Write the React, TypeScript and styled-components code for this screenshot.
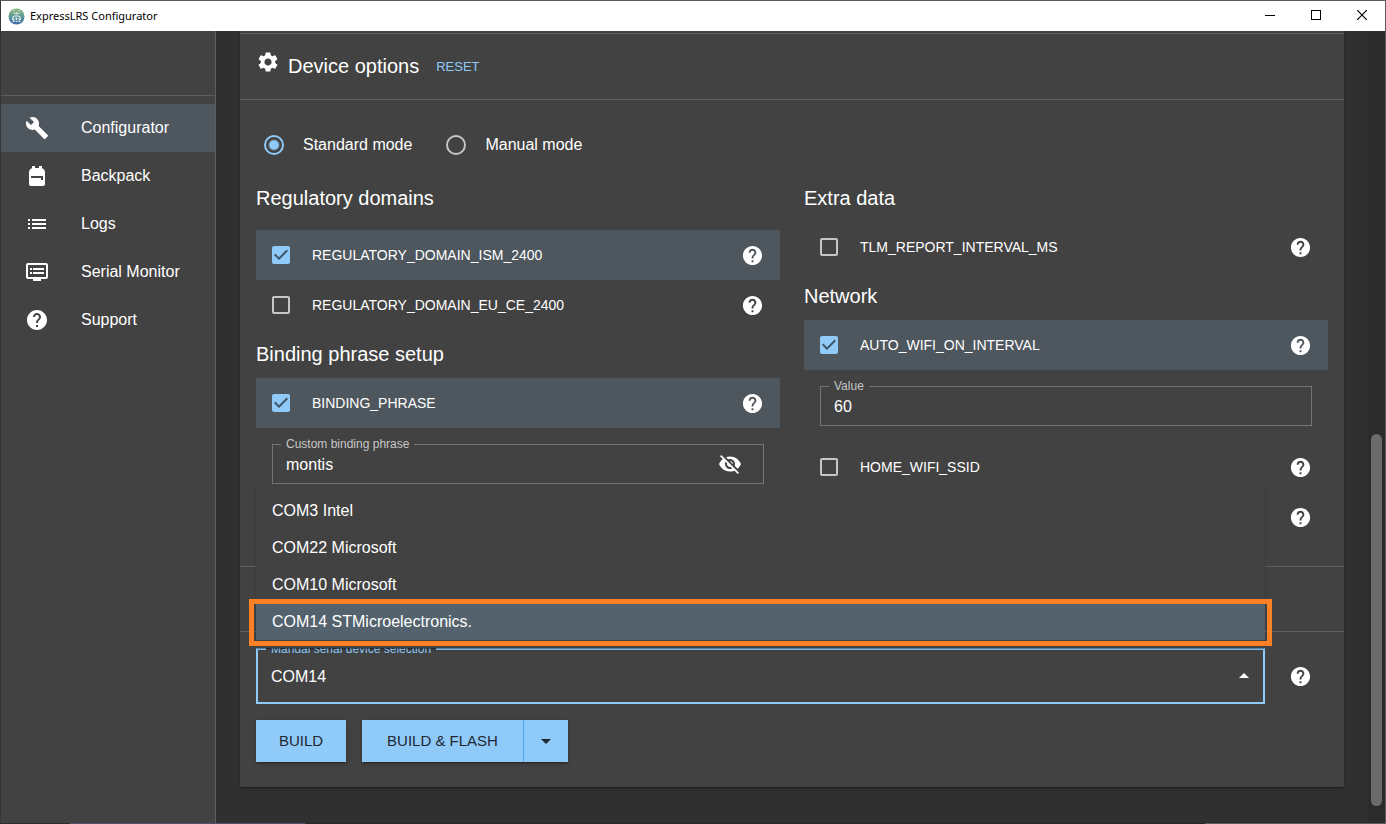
import React, { useState } from 'react';
import styled, { createGlobalStyle, css } from 'styled-components';
import {
  MdArrowDropDown,
  MdArrowDropUp,
  MdBuild,
  MdDvr,
  MdHelp,
  MdList,
  MdSettings,
  MdVisibilityOff,
} from 'react-icons/md';

const GlobalStyle = createGlobalStyle`
  *, *::before, *::after { box-sizing: border-box; }
  body {
    margin: 0;
    background: #303030;
    color: #fff;
    font: 16px/24px "Liberation Sans", Arial, sans-serif;
  }
  button, input, select { font: inherit; color: inherit; }
  button { cursor: pointer; }
  h2, h3, ul { margin: 0; padding: 0; font-weight: 400; }
  ul { list-style: none; }
`;

/* ---------- window ---------- */

const Window = styled.div`
  min-height: 100vh;
  display: flex;
  flex-direction: column;
  border: 1px solid #5c5c5f;
  border-left-color: #363636;
  border-bottom: 0;
`;

const TitleBar = styled.header`
  height: 30px;
  display: flex;
  align-items: center;
  padding-left: 7px;
  gap: 5px;
  background: #fff;
  color: #000;
`;

const WindowTitle = styled.span`
  flex: 1;
  font: 11px/16px "Noto Sans", "Open Sans", sans-serif;
`;

const WindowControls = styled.div`
  display: flex;
`;

const WindowButton = styled.button`
  width: 46px;
  height: 30px;
  padding: 0 0 2px;
  display: grid;
  place-items: center;
  border: 0;
  background: none;
`;

const WindowEdge = styled.div`
  height: 1px;
  background: linear-gradient(
    90deg,
    #2e2a2b 5%,
    #4d5565 5% 22%,
    #2a2729 22% 87%,
    #5c5c5c 87%
  );
`;

const Workspace = styled.div`
  flex: 1;
  display: flex;
`;

/* ---------- side navigation ---------- */

const Sidebar = styled.nav`
  width: 215px;
  flex: none;
  background: #424242;
  border-right: 1px solid #5e5e5e;
`;

const SidebarTop = styled.div`
  height: 65px;
  border-bottom: 1px solid #5e5e5e;
`;

const NavList = styled.ul`
  padding-top: 8px;
`;

const NavLink = styled.a<{ $active?: boolean }>`
  height: 48px;
  display: flex;
  align-items: center;
  gap: 32px;
  padding: 0 24px;
  color: #fff;
  text-decoration: none;
  background: ${(p) => (p.$active ? '#4e565e' : 'transparent')};

  svg { flex: none; }
`;

/* ---------- content ---------- */

const Main = styled.main`
  flex: 1;
  min-width: 0;
  padding: 0 24px 36px;
`;

const Card = styled.div`
  padding-top: 2px;
  background: #424242;
  box-shadow: 0 2px 1px -1px rgba(0, 0, 0, 0.2), 0 1px 1px rgba(0, 0, 0, 0.14),
    0 1px 3px rgba(0, 0, 0, 0.12);
`;

const SectionHeader = styled.div`
  min-height: 66px;
  display: flex;
  padding: 16px;
  border: solid #5e5e5e;
  border-width: 1px 0;
`;

const SectionTitle = styled.h2`
  display: flex;
  gap: 8px;
  margin-right: 12px;
  font-size: 20px;
  line-height: 32px;
`;

const ResetButton = styled.button`
  padding: 4px 5px;
  border: 0;
  background: none;
  color: #90caf9;
  font-size: 13px;
  line-height: 25px;
`;

const OptionsBody = styled.div`
  padding: 24px 16px;
`;

const ModeGroup = styled.div`
  display: flex;
  gap: 34px;
  height: 42px;
  margin-bottom: 8px;
  padding-left: 8px;
`;

const ModeLabel = styled.label`
  display: flex;
  align-items: center;
  gap: 19px;
`;

const Radio = styled.input`
  appearance: none;
  width: 20px;
  height: 20px;
  margin: 0;
  border: 2px solid #c6c6c6;
  border-radius: 50%;

  &:checked {
    border-color: #90caf9;
    background: radial-gradient(circle, #90caf9 4px, transparent 6px);
  }
`;

const Columns = styled.div`
  display: grid;
  grid-template-columns: 1fr 1fr;
  gap: 24px;
`;

const GroupTitle = styled.h3`
  padding: 8px 0;
  font-size: 20px;
  line-height: 32px;
`;

const FlagList = styled.ul<{ $spaced?: boolean }>`
  padding-top: ${(p) => (p.$spaced ? '8px' : '0')};
`;

const FlagRow = styled.li<{ $selected?: boolean }>`
  height: 50px;
  display: flex;
  align-items: center;
  justify-content: flex-end;
  padding: 0 16px;
  background: ${(p) => (p.$selected ? '#4e565e' : 'transparent')};
`;

const FlagLabel = styled.label`
  flex: 1;
  display: flex;
  align-items: center;
  gap: 22px;
  font-size: 14px;
`;

const CheckBoxFrame = styled.span`
  display: grid;

  > * { grid-area: 1 / 1; }
  svg { pointer-events: none; }
`;

const CheckBox = styled.input`
  appearance: none;
  width: 18px;
  height: 18px;
  margin: 0;
  border: 2px solid #c6c6c6;
  border-radius: 2px;

  &:checked {
    border-color: #90caf9;
    background: #90caf9;
  }
`;

const IconButton = styled.button`
  flex: none;
  display: flex;
  padding: 0;
  border: 0;
  background: none;
`;

const HelpIconButton = styled(IconButton)`
  padding: 1px 0 0 1px;
`;

const outlineLabel = css`
  position: absolute;
  left: 8px;
  top: -9px;
  padding: 0 5px;
  background: #424242;
  font-size: 12px;
  line-height: 16px;
`;

const Field = styled.div`
  position: relative;
  height: 40px;
  margin: 16px;
  display: flex;
  align-items: center;
  padding: 0 21px 0 13px;
  border: 1px solid #757575;
`;

const FieldLabel = styled.label`
  ${outlineLabel}
  color: #c6c6c6;
`;

const TextInput = styled.input`
  flex: 1;
  min-width: 0;
  padding: 1px 0 0;
  border: 0;
  outline: 0;
  background: none;
`;

/* ---------- actions ---------- */

const ActionsBody = styled.div`
  padding: 16px 16px 24px;
`;

const DeviceRow = styled.div`
  display: flex;
  align-items: center;
  gap: 23px;
  padding-right: 16px;
`;

const SelectBox = styled.div`
  position: relative;
  flex: 1;
  height: 56px;
  display: flex;
  border: 2px solid #90caf9;
`;

const SelectLabel = styled.label`
  ${outlineLabel}
  color: #90caf9;
`;

const DeviceSelect = styled.select`
  appearance: none;
  flex: 1;
  padding: 1px 40px 0 13px;
  border: 0;
  outline: 0;
  background: none;
`;

const SelectArrow = styled.span`
  position: absolute;
  right: 7px;
  top: 14px;
  display: flex;
  pointer-events: none;
`;

const Menu = styled.ul`
  position: absolute;
  z-index: 2;
  left: -2px;
  right: -2px;
  bottom: calc(100% + 2px);
  padding: 8px 0;
  background: #424242;
  box-shadow: 0 2px 1px -1px rgba(0, 0, 0, 0.2), 0 1px 1px rgba(0, 0, 0, 0.14),
    0 1px 3px rgba(0, 0, 0, 0.12);
`;

const MenuItem = styled.li<{ $selected?: boolean }>`
  position: relative;
  padding: 6px 16px;
  line-height: 25px;
  cursor: pointer;

  ${(p) =>
    p.$selected &&
    css`
      background: #54626d;

      &::after {
        content: '';
        position: absolute;
        inset: -4px -7px -6px;
        border: 5px solid #ff8127;
      }
    `}
`;

const ButtonRow = styled.div`
  display: flex;
  gap: 16px;
  margin-top: 16px;
  padding-bottom: 1px;
`;

const PrimaryButton = styled.button`
  height: 42px;
  min-width: 44px;
  display: grid;
  place-items: center;
  padding: 0 22px;
  border: 0;
  background: #90caf9;
  color: #1d2832;
  font-size: 15px;
  box-shadow: 0 3px 1px -2px rgba(0, 0, 0, 0.2), 0 2px 2px rgba(0, 0, 0, 0.14),
    0 1px 5px rgba(0, 0, 0, 0.12);
`;

const BuildButton = styled(PrimaryButton)`
  min-width: 90px;
`;

const SplitButton = styled.div`
  display: flex;
  box-shadow: 0 3px 1px -2px rgba(0, 0, 0, 0.2), 0 2px 2px rgba(0, 0, 0, 0.14),
    0 1px 5px rgba(0, 0, 0, 0.12);
`;

const FlashButton = styled(PrimaryButton)`
  min-width: 162px;
  border-right: 1px solid #42a5f5;
  box-shadow: none;
`;

const FlashMenuButton = styled(PrimaryButton)`
  padding: 0 10px;
  box-shadow: none;
`;

/* ---------- scroll bar ---------- */

const ScrollTrack = styled.div`
  width: 17px;
  flex: none;
  display: flex;
  flex-direction: column;
  justify-content: flex-end;
  padding: 0 3px 17px;
  background: #2b2b2b;
`;

const ScrollThumb = styled.div`
  height: 48%;
  border-radius: 6px;
  background: #6b6b6b;
`;

/* ---------- drawings ---------- */

const AppLogo = () => (
  <svg width="17" height="17" viewBox="0 0 34 34" aria-hidden="true">
    <defs>
      <linearGradient id="logo" x1="0" y1="0" x2="0" y2="1">
        <stop offset="0" stopColor="#8db97c" />
        <stop offset="0.5" stopColor="#5c9a98" />
        <stop offset="1" stopColor="#3d68ae" />
      </linearGradient>
    </defs>
    <circle cx="17" cy="17" r="16" fill="url(#logo)" />
    <g fill="none" stroke="#e9f3ee" strokeWidth="2">
      <path d="M12 4v3M22 4v3M11 10q6 4 12 0M17 8v3" />
      <path d="M9 18l4-2h8l4 2M13 20H9v3h3v4H9M21 20h4v3h-3v4h3" />
      <path d="M16 20h2v3h-2zM15 27h4" />
    </g>
  </svg>
);

const BackpackIcon = () => (
  <svg width="24" height="24" viewBox="0 0 24 24" fill="currentColor" aria-hidden="true">
    <path d="M20 8v12c0 1.100-.9 2-2 2H6c-1.100 0-2-.9-2-2V8c0-1.860 1.280-3.410 3-3.860V2h3v2h4V2h3v2.140c1.720.45 3 2 3 3.860zM6 12v2h10v2h2v-4H6z" />
  </svg>
);

const CheckMark = () => (
  <svg width="18" height="18" viewBox="3 3 18 18" fill="#3f5566" aria-hidden="true">
    <path d="M10 17l-5-5 1.410-1.410L10 14.170l7.590-7.590L19 8z" />
  </svg>
);

/* ---------- composed parts ---------- */

const HelpButton = ({ topic }: { topic: string }) => (
  <HelpIconButton type="button" aria-label={`Help: ${topic}`}>
    <MdHelp size={23} />
  </HelpIconButton>
);

const Flag = ({ name, on = false }: { name: string; on?: boolean }) => {
  const [checked, setChecked] = useState(on);
  return (
    <FlagRow $selected={checked}>
      <FlagLabel>
        <CheckBoxFrame>
          <CheckBox
            type="checkbox"
            checked={checked}
            onChange={(e) => setChecked(e.target.checked)}
          />
          {checked && <CheckMark />}
        </CheckBoxFrame>
        {name}
      </FlagLabel>
      <HelpButton topic={name} />
    </FlagRow>
  );
};

const pages = [
  { name: 'Configurator', icon: <MdBuild size={24} /> },
  { name: 'Backpack', icon: <BackpackIcon /> },
  { name: 'Logs', icon: <MdList size={24} /> },
  { name: 'Serial Monitor', icon: <MdDvr size={24} /> },
  { name: 'Support', icon: <MdHelp size={24} /> },
];

const devices = [
  { port: 'COM3', maker: 'Intel' },
  { port: 'COM22', maker: 'Microsoft' },
  { port: 'COM10', maker: 'Microsoft' },
  { port: 'COM14', maker: 'STMicroelectronics.' },
];

const DevicePicker = () => {
  const [port, setPort] = useState('COM14');
  const [open, setOpen] = useState(true);
  return (
    <SelectBox>
      <SelectLabel htmlFor="device">Manual serial device selection</SelectLabel>
      <DeviceSelect
        id="device"
        value={port}
        onChange={(e) => setPort(e.target.value)}
        onMouseDown={(e) => {
          e.preventDefault();
          setOpen(!open);
        }}
      >
        {devices.map((d) => (
          <option key={d.port}>{d.port}</option>
        ))}
      </DeviceSelect>
      <SelectArrow>
        {open ? <MdArrowDropUp size={24} /> : <MdArrowDropDown size={24} />}
      </SelectArrow>
      {open && (
        <Menu role="listbox" aria-label="Serial devices">
          {devices.map((d) => (
            <MenuItem
              key={d.port}
              role="option"
              aria-selected={d.port === port}
              $selected={d.port === port}
              onClick={() => {
                setPort(d.port);
                setOpen(false);
              }}
            >
              {d.port} {d.maker}
            </MenuItem>
          ))}
        </Menu>
      )}
    </SelectBox>
  );
};

export default function App() {
  return (
    <>
      <GlobalStyle />
      <Window>
        <TitleBar>
          <AppLogo />
          <WindowTitle>ExpressLRS Configurator</WindowTitle>
          <WindowControls>
            <WindowButton type="button" aria-label="Minimize">
              <svg width="10" height="10" shapeRendering="crispEdges">
                <path d="M0 5.500h10" stroke="#000" />
              </svg>
            </WindowButton>
            <WindowButton type="button" aria-label="Maximize">
              <svg width="10" height="10" shapeRendering="crispEdges">
                <path d="M.5.5h9v9h-9z" stroke="#000" fill="none" />
              </svg>
            </WindowButton>
            <WindowButton type="button" aria-label="Close">
              <svg width="10" height="10">
                <path d="M0 0l10 10M10 0L0 10" stroke="#000" strokeWidth="1.200" />
              </svg>
            </WindowButton>
          </WindowControls>
        </TitleBar>

        <Workspace>
          <Sidebar>
            <SidebarTop />
            <NavList>
              {pages.map((page, i) => (
                <li key={page.name}>
                  <NavLink href="#" $active={i === 0}>
                    {page.icon}
                    {page.name}
                  </NavLink>
                </li>
              ))}
            </NavList>
          </Sidebar>

          <Main>
            <Card>
              <SectionHeader>
                <SectionTitle>
                  <MdSettings size={24} />
                  Device options
                </SectionTitle>
                <ResetButton type="button">RESET</ResetButton>
              </SectionHeader>

              <OptionsBody>
                <ModeGroup role="radiogroup" aria-label="Mode">
                  <ModeLabel>
                    <Radio type="radio" name="mode" defaultChecked />
                    Standard mode
                  </ModeLabel>
                  <ModeLabel>
                    <Radio type="radio" name="mode" />
                    Manual mode
                  </ModeLabel>
                </ModeGroup>

                <Columns>
                  <section>
                    <GroupTitle>Regulatory domains</GroupTitle>
                    <FlagList $spaced>
                      <Flag name="REGULATORY_DOMAIN_ISM_2400" on />
                      <Flag name="REGULATORY_DOMAIN_EU_CE_2400" />
                    </FlagList>
                    <GroupTitle>Binding phrase setup</GroupTitle>
                    <FlagList>
                      <Flag name="BINDING_PHRASE" on />
                    </FlagList>
                    <Field>
                      <FieldLabel htmlFor="phrase">Custom binding phrase</FieldLabel>
                      <TextInput id="phrase" type="text" defaultValue="montis" />
                      <IconButton type="button" aria-label="Hide phrase">
                        <MdVisibilityOff size={24} />
                      </IconButton>
                    </Field>
                  </section>

                  <section>
                    <GroupTitle>Extra data</GroupTitle>
                    <FlagList>
                      <Flag name="TLM_REPORT_INTERVAL_MS" />
                    </FlagList>
                    <GroupTitle>Network</GroupTitle>
                    <FlagList>
                      <Flag name="AUTO_WIFI_ON_INTERVAL" on />
                    </FlagList>
                    <Field>
                      <FieldLabel htmlFor="interval">Value</FieldLabel>
                      <TextInput id="interval" type="text" defaultValue="60" />
                    </Field>
                    <FlagList>
                      <Flag name="HOME_WIFI_SSID" />
                      <FlagRow>
                        <HelpButton topic="Home network" />
                      </FlagRow>
                    </FlagList>
                  </section>
                </Columns>
              </OptionsBody>

              <SectionHeader />

              <ActionsBody>
                <DeviceRow>
                  <DevicePicker />
                  <HelpButton topic="Serial device" />
                </DeviceRow>
                <ButtonRow>
                  <BuildButton type="button">BUILD</BuildButton>
                  <SplitButton>
                    <FlashButton type="button">BUILD &amp; FLASH</FlashButton>
                    <FlashMenuButton type="button" aria-label="More build actions">
                      <MdArrowDropDown size={24} />
                    </FlashMenuButton>
                  </SplitButton>
                </ButtonRow>
              </ActionsBody>
            </Card>
          </Main>

          <ScrollTrack>
            <ScrollThumb />
          </ScrollTrack>
        </Workspace>
        <WindowEdge />
      </Window>
    </>
  );
}
